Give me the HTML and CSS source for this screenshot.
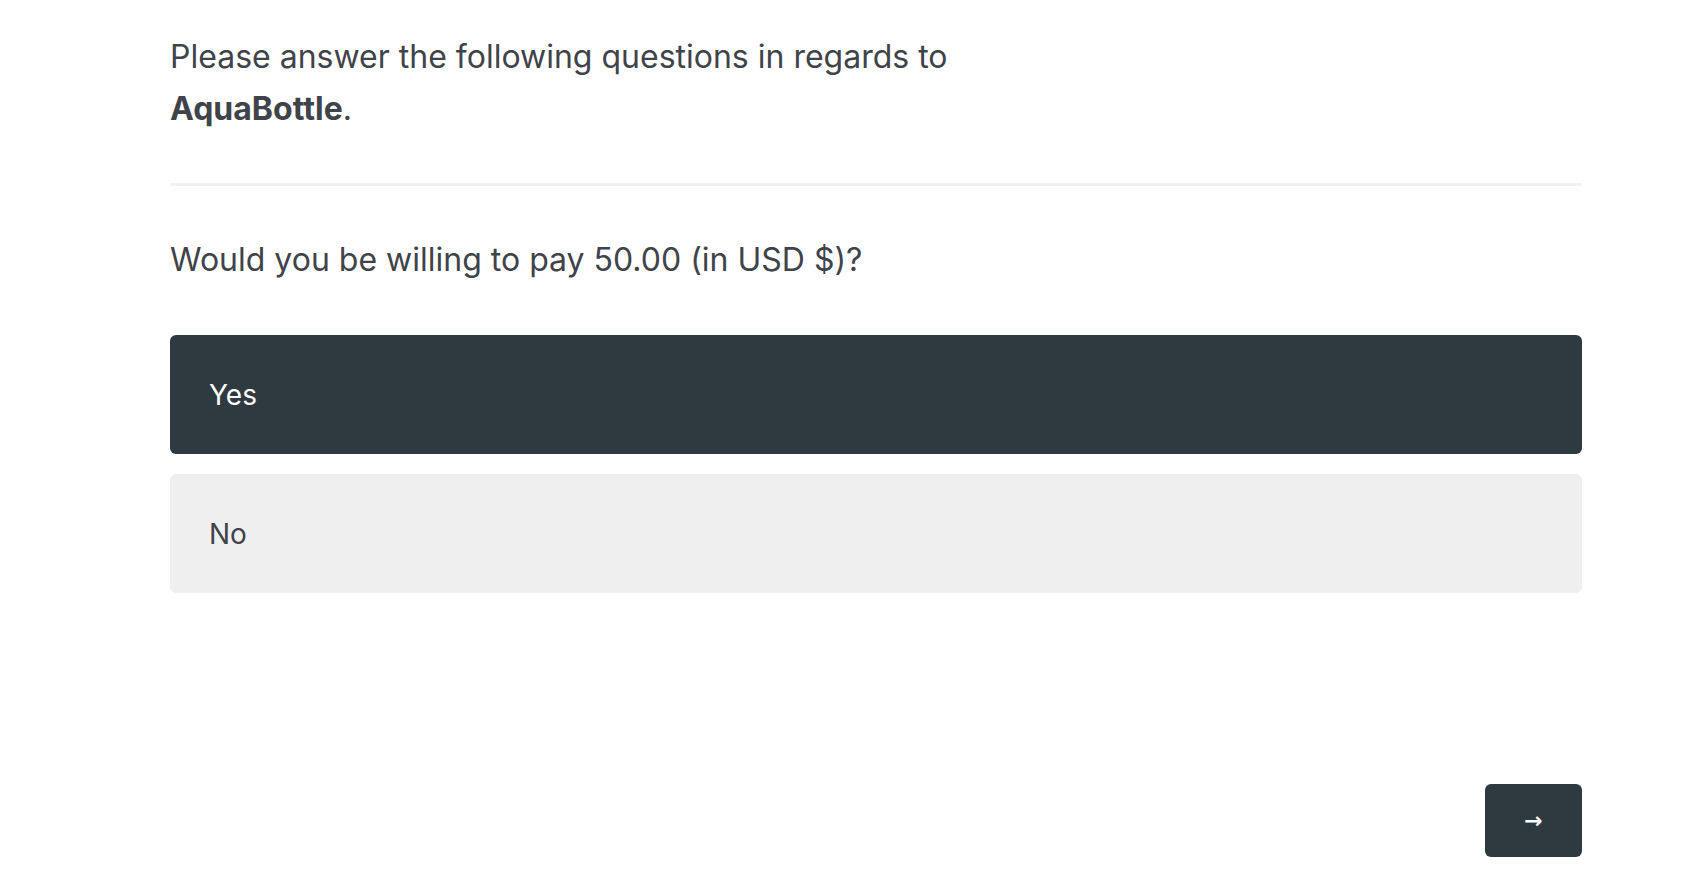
FILE: index.html
```html
<!DOCTYPE html>
<html lang="en">
<head>
    <meta charset="UTF-8">
    <meta name="viewport" content="width=device-width, initial-scale=1.0">
    <title>Survey</title>
    <link rel="stylesheet" href="styles.css">
</head>
<body>
    <div class="survey">
        <p class="intro">Please answer the following questions in regards to<br><strong>AquaBottle</strong>.</p>
        <hr class="divider">
        <p class="question">Would you be willing to pay 50.00 (in USD $)?</p>
        <div class="options">
            <button class="option selected">Yes</button>
            <button class="option">No</button>
        </div>
        <div class="actions">
            <button class="next">&rarr;</button>
        </div>
    </div>
</body>
</html>
```

FILE: styles.css
```css
body {
    margin: 0;
    background-color: #fff;
    color: #3f434a;
    font-family: Inter, "Liberation Sans", sans-serif;
    font-variant-ligatures: none;
}

.survey {
    width: 1412px;
    margin-left: 170px;
    padding-top: 31px;
}

.intro {
    margin: 0;
    font-size: 32px;
    line-height: 52px;
}

.intro strong {
    font-weight: 700;
}

.divider {
    margin: 48px 0 0;
    border: none;
    height: 3px;
    background-color: #f1f1f1;
}

.question {
    margin: 48px 0 0;
    font-size: 32px;
    line-height: 52px;
}

.options {
    margin-top: 49px;
    display: flex;
    flex-direction: column;
    gap: 20px;
}

.option {
    height: 119px;
    padding: 0 39px;
    border: none;
    border-radius: 6px;
    background-color: #efefef;
    color: #3f434a;
    font-family: inherit;
    font-size: 28px;
    text-align: left;
}

.option.selected {
    background-color: #2f3940;
    color: #fff;
}

.actions {
    margin-top: 191px;
    display: flex;
    justify-content: flex-end;
}

.next {
    width: 97px;
    height: 73px;
    border: none;
    border-radius: 6px;
    background-color: #2f3940;
    color: #fff;
    font-family: "DejaVu Sans", sans-serif;
    font-size: 22px;
    font-weight: bold;
}
```
